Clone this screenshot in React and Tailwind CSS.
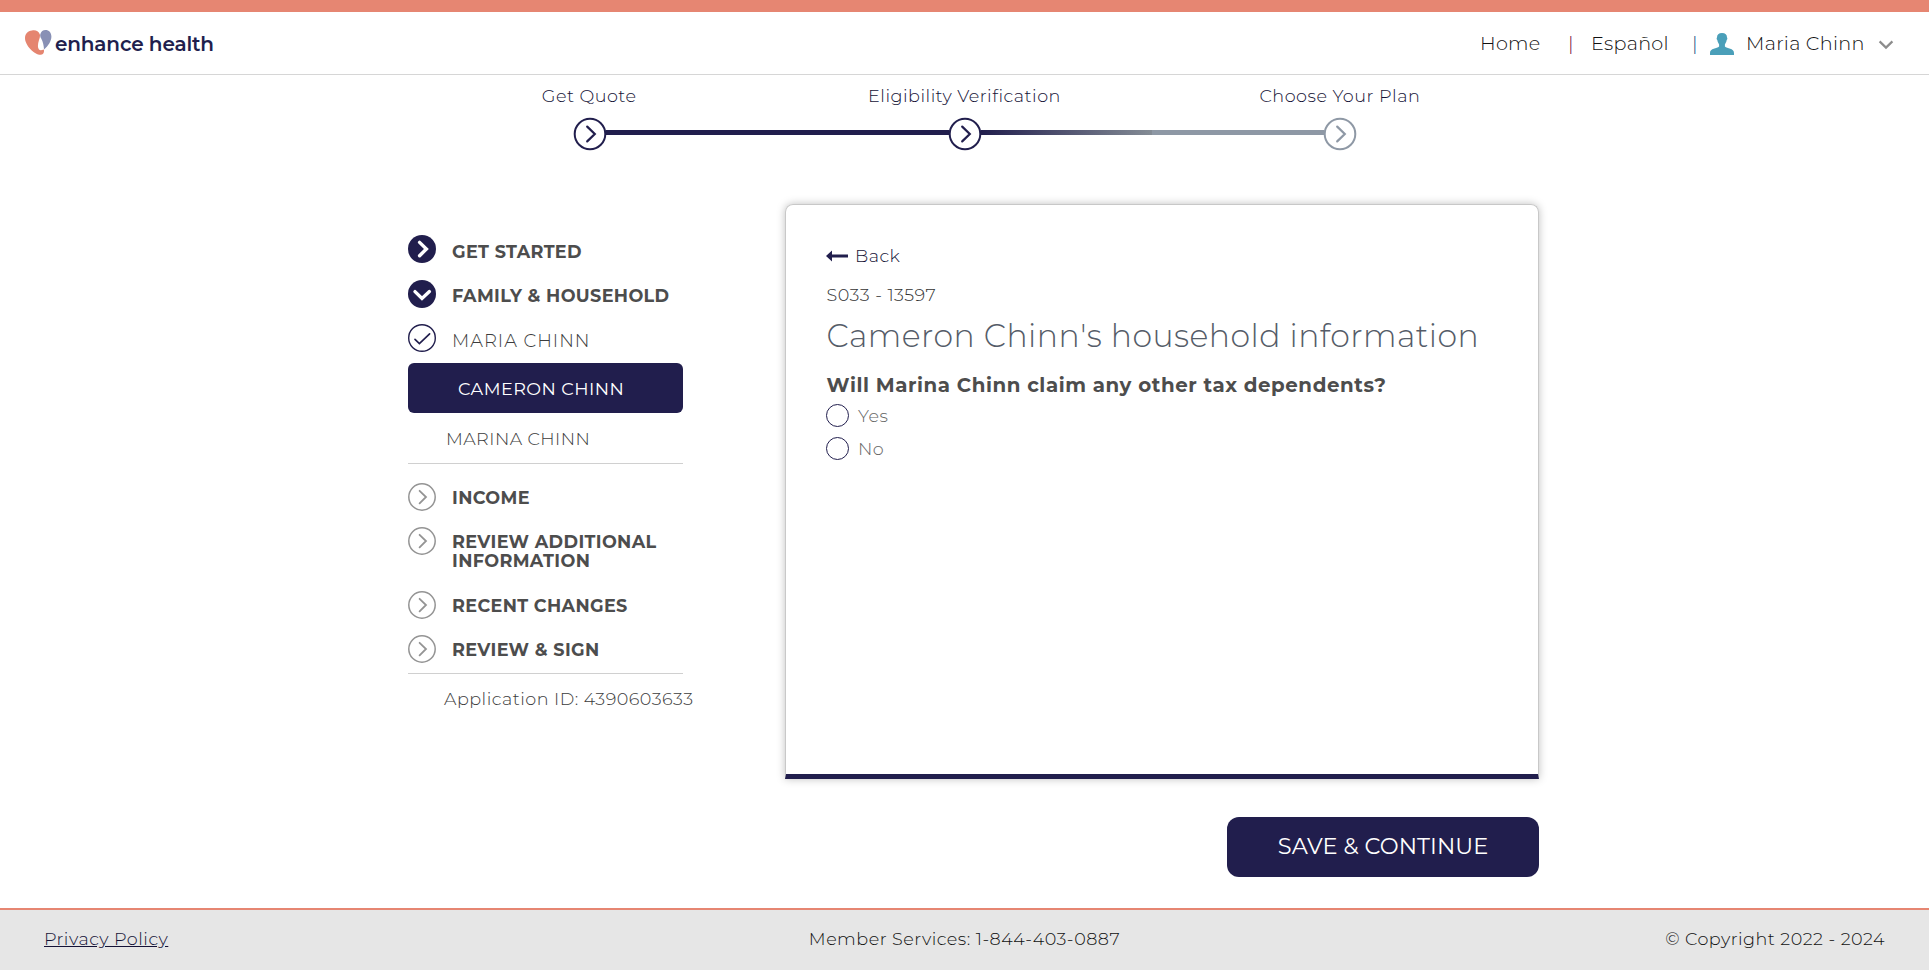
import React from "react";

const NAVY = "#211e4d";

function Logo() {
  return (
    <div className="flex items-start">
      <svg width="28" height="26" viewBox="0 0 28 26" className="mt-[18px] shrink-0">
        <path
          d="M7 0.4C10.5-0.4 13.6 1 14.8 4.2C15.3 6 14.9 7.8 14 10C13.1 12.6 12.7 15.4 13.1 17.6C13.6 20 15.2 21 18.8 19.4C19.6 22.4 18.2 24.7 15.6 24.8C9.6 24.8 0 15.6 0 8C0 4 2.6 0.7 7 0.4Z"
          fill="#e58570"
        />
        <path
          d="M20.4 0C24 0 26.4 2.6 26.4 6.6C26.4 11 23.6 15.6 19 19.6C18.8 15.6 18 11.6 16.2 8.6C15.2 6.8 15 5.6 15.3 4.2C16 1.5 18 0 20.4 0Z"
          fill="#8890b5"
        />
      </svg>
      <span className="ml-0.5 mt-[18px] text-[20px] leading-[28px] font-semibold tracking-[-0.16px] text-[#211e4d]">
        enhance health
      </span>
    </div>
  );
}

function Header() {
  return (
    <header className="flex h-[75px] items-start justify-between border-t-[12px] border-b border-t-[#e68672] border-b-[#d6d6d6] pl-[25px] text-[19.2px] leading-[24px] font-light tracking-[0.3px] text-[#111]">
      <Logo />
      <nav className="flex w-[449px] items-start pt-[19px] whitespace-nowrap">
        <a className="w-[88px]">Home</a>
        <span className="w-[23px] text-[#7a1040]">|</span>
        <a className="w-[101px]">Español</a>
        <span className="w-[18px] text-[#1f4f80]">|</span>
        <svg width="24" height="22" viewBox="0 0 24 22" className="mt-0.5 mr-[12px] shrink-0">
          <path
            d="M12 0C15.4 0 17 1.6 17 4.6C17.6 5 17.4 6.6 16.7 7C16.3 9.6 15.2 10.6 14.9 11.4V13.6C17 15.6 24 15.2 24 20V22H0V20C0 15.2 7 15.6 9.1 13.6V11.4C8.8 10.6 7.7 9.6 7.3 7C6.6 6.6 6.4 5 7 4.6C7 1.6 8.6 0 12 0Z"
            fill="#4a9fb9"
          />
        </svg>
        <a className="w-[132px]">Maria Chinn</a>
        <svg width="16" height="10" viewBox="0 0 16 10" className="mt-[9px] shrink-0">
          <path d="M1.6 1.4L8 7.6L14.4 1.4" fill="none" stroke="#8c8c8c" strokeWidth="2.2" />
        </svg>
      </nav>
    </header>
  );
}

function StepIcon({ color }) {
  return (
    <svg width="34" height="34" viewBox="0 0 34 34" className="-mx-px shrink-0">
      <circle cx="17" cy="17" r="15.3" fill="#fff" stroke={color} strokeWidth="2" />
      <path
        d="M14.2 9.6L21.8 17L14.2 24.4"
        fill="none"
        stroke={color}
        strokeWidth="2.2"
        strokeLinecap="round"
      />
    </svg>
  );
}

function Stepper() {
  return (
    <div className="mx-auto mt-[11px] w-[1126px] text-[17.6px] leading-[20px] font-light tracking-[0.5px] text-[#141236]">
      <div className="grid grid-cols-3 text-center">
        <span>Get Quote</span>
        <span>Eligibility Verification</span>
        <span>Choose Your Plan</span>
      </div>
      <div className="mt-[11px] flex items-center px-[172px]">
        <StepIcon color={NAVY} />
        <div className="-mt-[3px] h-[5px] flex-1 bg-[#211e4d]" />
        <StepIcon color={NAVY} />
        <div className="-mt-[3px] flex h-[5px] flex-1">
          <div className="flex-1 bg-linear-to-r/srgb from-[#211e4d] to-[#848c95]" />
          <div className="flex-1 bg-[#8e98a5]" />
        </div>
        <StepIcon color="#8e98a5" />
      </div>
    </div>
  );
}

function SideIcon({ kind }) {
  return (
    <svg width="28" height="28" viewBox="0 0 28 28" className="shrink-0">
      {kind === "open" && (
        <>
          <circle cx="14" cy="14" r="14" fill={NAVY} />
          <path d="M11.6 7.4L18.4 14L11.6 20.8" fill="none" stroke="#fff" strokeWidth="3.4" strokeLinecap="round" />
        </>
      )}
      {kind === "down" && (
        <>
          <circle cx="14" cy="14" r="14" fill={NAVY} />
          <path d="M7 11.6L14 18.4L21.4 11.6" fill="none" stroke="#fff" strokeWidth="3.4" strokeLinecap="round" />
        </>
      )}
      {kind === "check" && (
        <>
          <circle cx="14" cy="14" r="13.3" fill="#fff" stroke={NAVY} strokeWidth="1.4" />
          <path d="M7 15.4L11.4 19.6L21.6 9.8" fill="none" stroke={NAVY} strokeWidth="1.7" strokeLinecap="round" />
        </>
      )}
      {kind === "next" && (
        <>
          <circle cx="14" cy="14" r="13.2" fill="#fff" stroke="#949494" strokeWidth="1.5" />
          <path d="M11.6 7.8L18 14L11.6 20.4" fill="none" stroke="#949494" strokeWidth="1.8" strokeLinecap="round" />
        </>
      )}
    </svg>
  );
}

function Sidebar() {
  return (
    <aside className="mt-[31px] w-[275px] shrink-0 text-[17.6px] leading-[19px] font-light tracking-[0.45px] whitespace-nowrap text-[#3c3c3c]">
      <div className="flex h-[45px] gap-4">
        <SideIcon kind="open" />
        <span className="pt-[7px] font-bold tracking-[0.36px] text-[#4d4d4d]">GET STARTED</span>
      </div>
      <div className="flex h-[44px] gap-4">
        <SideIcon kind="down" />
        <span className="pt-[6px] font-bold tracking-[0.36px] text-[#4d4d4d]">FAMILY &amp; HOUSEHOLD</span>
      </div>
      <div className="flex h-[39px] gap-4">
        <SideIcon kind="check" />
        <span className="pt-[8px] text-[18px] tracking-[1px]">MARIA CHINN</span>
      </div>
      <div className="flex h-[50px] items-center rounded-md bg-[#211e4d] pl-[50px] font-normal text-white">
        CAMERON CHINN
      </div>
      <div className="h-[51px] border-b border-[#d0d0d0] pt-[16px] pl-[38px]">MARINA CHINN</div>
      <div className="h-[210px] border-b border-[#d0d0d0] pt-[19px] font-bold tracking-[0.36px] text-[#4d4d4d]">
        <div className="flex h-[44px] gap-4">
          <SideIcon kind="next" />
          <span className="pt-[5px]">INCOME</span>
        </div>
        <div className="flex h-[64px] gap-4">
          <SideIcon kind="next" />
          <span className="pt-[5px]">
            REVIEW ADDITIONAL
            <br />
            INFORMATION
          </span>
        </div>
        <div className="flex h-[44px] gap-4">
          <SideIcon kind="next" />
          <span className="pt-[5px]">RECENT CHANGES</span>
        </div>
        <div className="flex gap-4">
          <SideIcon kind="next" />
          <span className="pt-[5px]">REVIEW &amp; SIGN</span>
        </div>
      </div>
      <div className="pt-[15px] pl-9 tracking-[0.48px]">Application ID: 4390603633</div>
    </aside>
  );
}

function Option({ label }) {
  return (
    <label className="flex items-center gap-[9px]">
      <span className="h-[23px] w-[23px] rounded-full border border-[#211e4d]" />
      <span className="text-[#666]">{label}</span>
    </label>
  );
}

function Card() {
  return (
    <section className="h-[575px] rounded-t-lg border border-b-[5px] border-[#c8c8c8] border-b-[#211e4d] pt-[41px] pl-10 text-[17.6px] leading-[20px] font-light tracking-[0.5px] text-[#4d4d4d] shadow-[0_0_8px_rgba(0,0,0,0.25)]">
      <a className="flex items-center text-[#141236]">
        <svg width="22" height="12" viewBox="0 0 22 12" className="mr-[7px]">
          <path d="M0 6L6 0.4V4.6H22V7.4H6V11.6Z" fill={NAVY} />
        </svg>
        Back
      </a>
      <p className="mt-[19px] pl-[0.5px] text-[#333]">S033 - 13597</p>
      <h1 className="mt-[11px] pl-[0.5px] text-[31.5px] leading-[40px] tracking-[0.47px] text-[#555c68]">
        Cameron Chinn's household information
      </h1>
      <h2 className="mt-[17px] pl-[0.5px] text-[19.8px] leading-[24px] font-bold tracking-[0.58px]">
        Will Marina Chinn claim any other tax dependents?
      </h2>
      <div className="mt-[7px] flex flex-col gap-[10px]">
        <Option label="Yes" />
        <Option label="No" />
      </div>
    </section>
  );
}

export default function App() {
  return (
    <div className="flex h-[970px] flex-col bg-white font-['Montserrat',Inter,sans-serif]">
      <Header />
      <Stepper />
      <main className="mt-[53px] flex pl-[408px]">
        <Sidebar />
        <div className="ml-[102px] flex w-[754px] flex-col">
          <Card />
          <button className="mt-[38px] h-[60px] w-[312px] self-end rounded-xl bg-[#211e4d] text-[22.5px] tracking-[0.06px] text-white">
            SAVE &amp; CONTINUE
          </button>
        </div>
      </main>
      <footer className="mt-auto grid h-[62px] grid-cols-3 border-t-2 border-[#e68672] bg-[#e6e6e6] px-[44px] pt-[19px] text-[17.6px] leading-[20px] font-light tracking-[0.48px] text-[#111]">
        <a className="text-[#141236] underline">Privacy Policy</a>
        <span className="text-center">Member Services: 1-844-403-0887</span>
        <span className="text-right">© Copyright 2022 - 2024</span>
      </footer>
    </div>
  );
}
